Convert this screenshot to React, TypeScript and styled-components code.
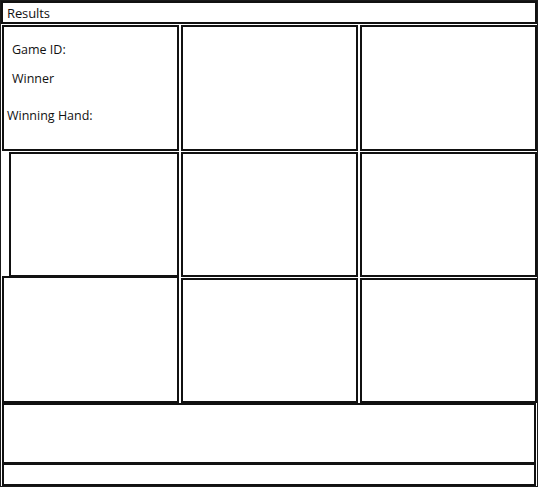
import React from "react";
import styled, { createGlobalStyle } from "styled-components";

const Global = createGlobalStyle`
  html, body { margin: 0; padding: 0; background: #fff; }
  body { font-family: "Open Sans", "Noto Sans", sans-serif; color: #111; }
`;

const Frame = styled.div`
  box-sizing: border-box;
  width: 538px;
  height: 487px;
  border: 1px solid #1a1a1a;
  display: flex;
  flex-direction: column;
  background: #fff;
`;

const Header = styled.div`
  box-sizing: border-box;
  height: 23px;
  border: 2px solid #111;
  display: flex;
  align-items: center;
  padding-left: 4px;
  font-size: 13px;
  letter-spacing: -0.1px;
`;

const Grid = styled.div`
  display: grid;
  grid-template-columns: 177px 177px 177px;
  grid-template-rows: 126px 125px 125px;
  column-gap: 2px;
  row-gap: 1px;
  margin: 1px 1px 0 1px;
`;

const Cell = styled.div<{ $inset?: number; $pad?: boolean; $shiftUp?: number }>`
  box-sizing: border-box;
  border: 2px solid #111;
  margin-left: ${(p) => p.$inset ?? 0}px;
  margin-top: ${(p) => -(p.$shiftUp ?? 0)}px;
  display: flex;
  flex-direction: column;
  padding: ${(p) => (p.$pad ? "13px 0 0 0" : "0")};
`;

const Label = styled.div<{ $indent: number; $gap: number }>`
  font-size: 12.5px;
  line-height: 16px;
  padding-left: ${(p) => p.$indent}px;
  margin-top: ${(p) => p.$gap}px;
  white-space: nowrap;
`;

const Footer = styled.div`
  box-sizing: border-box;
  height: 61px;
  margin: 0 1px 0 1px;
  border: 2px solid #111;
`;

const StatusBar = styled.div`
  box-sizing: border-box;
  flex: 1;
  margin: 0 1px 0 1px;
  border: 2px solid #111;
  border-top-width: 1px;
`;

export default function App() {
  return (
    <>
      <Global />
      <Frame>
        <Header>Results</Header>
        <Grid>
          <Cell $pad>
            <Label $indent={8} $gap={2}>Game ID:</Label>
            <Label $indent={8} $gap={13}>Winner</Label>
            <Label $indent={3} $gap={21}>Winning Hand:</Label>
          </Cell>
          <Cell />
          <Cell />
          <Cell $inset={7} />
          <Cell />
          <Cell />
          <Cell $shiftUp={2} />
          <Cell />
          <Cell />
        </Grid>
        <Footer />
        <StatusBar />
      </Frame>
    </>
  );
}
